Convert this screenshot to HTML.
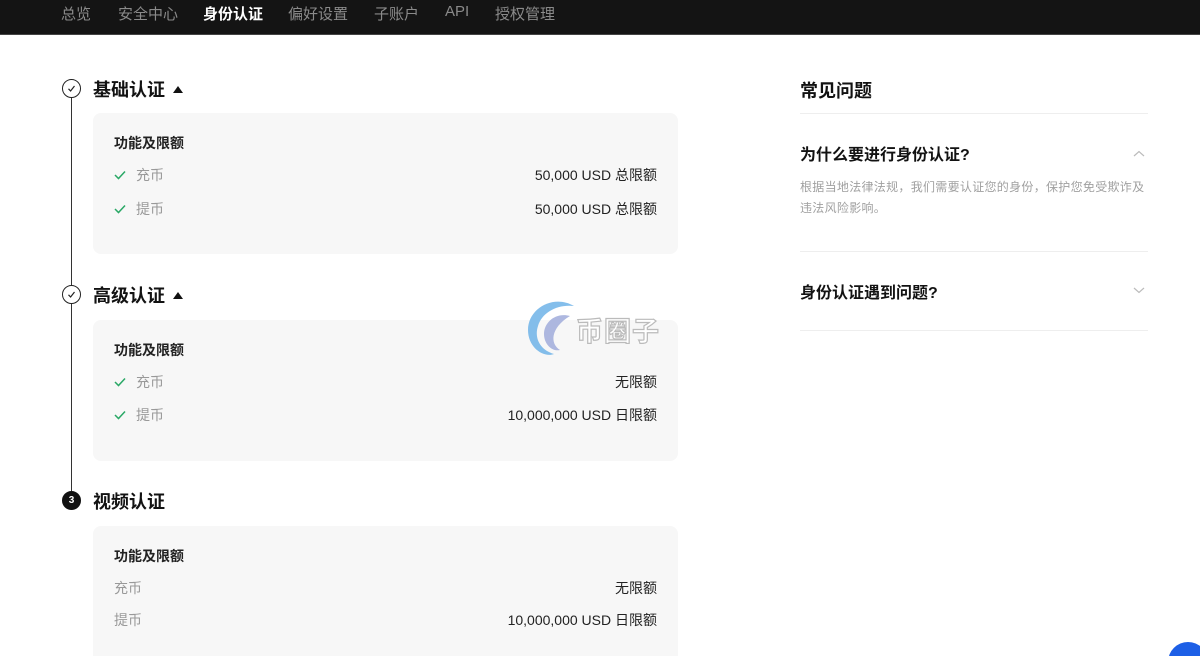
<!DOCTYPE html>
<html><head><meta charset="utf-8">
<style>
*{margin:0;padding:0;box-sizing:border-box}
html,body{width:1200px;height:656px;overflow:hidden}
body{background:#fff;font-family:"Liberation Sans","Noto Sans CJK SC",sans-serif;color:#121212;position:relative}
.nav{height:35px;background:#141414;border-bottom:1px solid #444;position:relative}
.nav span{position:absolute;top:3px;font-size:15px;color:#8a8a8a}
.nav span.on{color:#fff;font-weight:bold}
.line{position:absolute;left:71px;top:97px;width:1px;height:395px;background:#333}
.circ{position:absolute;left:62px;width:19px;height:19px;border:1.3px solid #222;border-radius:50%;background:#fff}
.circ svg{position:absolute;left:4px;top:4px}
.circ.n{background:#111;color:#fff;font-weight:bold;border-color:#111;font-size:10px;text-align:center;line-height:17px}
.h{position:absolute;left:93px;font-size:18px;font-weight:bold}
.tri{display:inline-block;width:0;height:0;border-left:5px solid transparent;border-right:5px solid transparent;border-bottom:7px solid #111;margin-left:8px;vertical-align:3px}
.card{position:absolute;left:93px;width:585px;background:#f7f7f7;border-radius:8px}
.card .t{position:absolute;left:21px;top:20px;font-size:14px;font-weight:bold;color:#222}
.row{position:absolute;left:21px;right:21px;font-size:14px;color:#999}
.row .r{position:absolute;right:0;top:0;color:#222}
.ck{display:inline-block;width:12px;height:10px;margin-right:10px;vertical-align:0}
.faq{position:absolute;left:800px;width:348px}
.blue{position:absolute;left:1168px;top:642px;width:40px;height:40px;border-radius:50%;background:#1d5fe6}
</style></head><body>
<div class="nav">
<span style="left:61px">总览</span>
<span style="left:118px">安全中心</span>
<span class="on" style="left:203px">身份认证</span>
<span style="left:288px">偏好设置</span>
<span style="left:374px">子账户</span>
<span style="left:445px">API</span>
<span style="left:495px">授权管理</span>
</div>
<div class="line"></div>
<div class="circ" style="top:79px"><svg width="9" height="9" viewBox="0 0 9 9"><path d="M1.5 4.8 L3.6 7 L7.5 2" fill="none" stroke="#222" stroke-width="1.2"/></svg></div>
<div class="h" style="top:76px">基础认证<span class="tri"></span></div>
<div class="card" style="top:113px;height:141px">
<div class="t">功能及限额</div>
<div class="row" style="top:52px"><svg class="ck" viewBox="0 0 12 10"><path d="M1 5 L4.5 8.5 L11 1.5" fill="none" stroke="#2aa866" stroke-width="1.5"/></svg>充币<span class="r">50,000 USD 总限额</span></div>
<div class="row" style="top:86px"><svg class="ck" viewBox="0 0 12 10"><path d="M1 5 L4.5 8.5 L11 1.5" fill="none" stroke="#2aa866" stroke-width="1.5"/></svg>提币<span class="r">50,000 USD 总限额</span></div>
</div>
<div class="circ" style="top:285px"><svg width="9" height="9" viewBox="0 0 9 9"><path d="M1.5 4.8 L3.6 7 L7.5 2" fill="none" stroke="#222" stroke-width="1.2"/></svg></div>
<div class="h" style="top:282px">高级认证<span class="tri"></span></div>
<div class="card" style="top:320px;height:141px">
<div class="t">功能及限额</div>
<div class="row" style="top:52px"><svg class="ck" viewBox="0 0 12 10"><path d="M1 5 L4.5 8.5 L11 1.5" fill="none" stroke="#2aa866" stroke-width="1.5"/></svg>充币<span class="r">无限额</span></div>
<div class="row" style="top:85px"><svg class="ck" viewBox="0 0 12 10"><path d="M1 5 L4.5 8.5 L11 1.5" fill="none" stroke="#2aa866" stroke-width="1.5"/></svg>提币<span class="r">10,000,000 USD 日限额</span></div>
</div>
<div class="circ n" style="top:491px">3</div>
<div class="h" style="top:488px">视频认证</div>
<div class="card" style="top:526px;height:150px">
<div class="t">功能及限额</div>
<div class="row" style="top:52px">充币<span class="r">无限额</span></div>
<div class="row" style="top:84px">提币<span class="r">10,000,000 USD 日限额</span></div>
</div>
<svg style="position:absolute;left:524px;top:298px" width="56" height="60" viewBox="0 0 56 60">
<path d="M50 8 C30 -4 4 10 4 32 C4 50 20 60 30 56 C16 52 10 40 14 28 C18 14 34 6 50 8Z" fill="#6fb3e8" opacity=".85"/>
<path d="M46 18 C32 14 20 24 20 36 C20 46 28 54 36 52 C26 46 26 30 46 18Z" fill="#9aa6d8" opacity=".8"/>
</svg>
<div style="position:absolute;left:576px;top:310px;font-size:27px;color:#fff;-webkit-text-stroke:1.2px #bbb;font-weight:bold;letter-spacing:1px">币圈子</div>
<div class="faq" style="top:77px;font-size:18px;font-weight:bold">常见问题</div>
<div class="faq" style="top:113px;border-top:1px solid #eee"></div>
<div class="faq" style="top:141px;font-size:16px;font-weight:bold">为什么要进行身份认证?</div>
<svg style="position:absolute;left:1133px;top:150px" width="12" height="7" viewBox="0 0 12 7"><path d="M1 6 L6 1.5 L11 6" fill="none" stroke="#bbb" stroke-width="1.2"/></svg>
<div class="faq" style="top:177px;font-size:12px;color:#a0a0a0;line-height:21px;letter-spacing:0.3px">根据当地法律法规，我们需要认证您的身份，保护您免受欺诈及<br>违法风险影响。</div>
<div class="faq" style="top:251px;border-top:1px solid #eee"></div>
<div class="faq" style="top:279px;font-size:16px;font-weight:bold">身份认证遇到问题?</div>
<svg style="position:absolute;left:1133px;top:287px" width="12" height="7" viewBox="0 0 12 7"><path d="M1 1 L6 5.5 L11 1" fill="none" stroke="#bbb" stroke-width="1.2"/></svg>
<div class="faq" style="top:330px;border-top:1px solid #eee"></div>
<div class="blue"></div>
</body></html>
